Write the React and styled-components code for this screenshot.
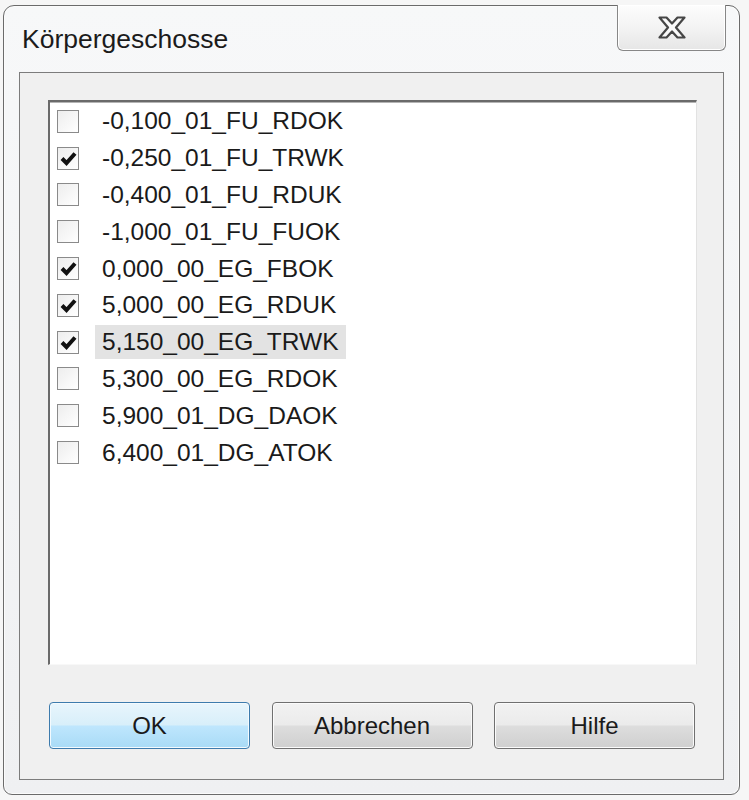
import React, { useState } from 'react';
import styled, { createGlobalStyle } from 'styled-components';

const GlobalStyle = createGlobalStyle`
  html, body {
    margin: 0;
    padding: 0;
    background: #f6f6f6;
    font-family: "Liberation Sans", Arial, sans-serif;
  }
`;

const Window = styled.div`
  box-sizing: border-box;
  margin: 5px 0 0 3px;
  width: 737px;
  height: 790px;
  border: 1px solid #6b6b6b;
  border-radius: 11px 11px 9px 9px;
  background: linear-gradient(180deg, #f7f8f9 0%, #eff0f2 100%);
  box-shadow: inset 0 0 0 1px #fbfbfb;
  display: flex;
  flex-direction: column;
`;

const TitleBar = styled.div`
  height: 66px;
  display: flex;
  justify-content: space-between;
  padding-left: 18px;
`;

const Title = styled.div`
  align-self: center;
  margin-top: 1px;
  font-size: 26.5px;
  color: #1b1b1b;
`;

const CloseButton = styled.button`
  box-sizing: border-box;
  margin: -1px 13px 0 0;
  width: 109px;
  height: 46px;
  border: 1px solid #878787;
  border-top: none;
  border-radius: 0 0 6px 6px;
  background: linear-gradient(180deg, #fdfdfd 0%, #f3f3f3 50%, #e6e6e6 100%);
  box-shadow: inset 0 0 0 1px #ffffff;
  display: flex;
  align-items: center;
  justify-content: center;
  padding: 0;
  cursor: pointer;
`;

const Client = styled.div`
  box-sizing: border-box;
  margin: 0 15px 0 15px;
  height: 708px;
  border: 1px solid #7c7c7c;
  background: #f0f0f0;
  padding: 27px 26px 0 28px;
  display: flex;
  flex-direction: column;
`;

const ListBox = styled.div`
  box-sizing: border-box;
  height: 565px;
  background: #ffffff;
  border-style: solid;
  border-width: 2px 1px 1px 2px;
  border-color: #6a6a6a #e2e2e2 #f8f8f8 #6a6a6a;
  box-shadow: inset 0 1px 0 #b4b4b4;
  padding: 1px 0 0 7px;
`;

const Row = styled.div`
  height: 36.8px;
  display: flex;
  align-items: center;
`;

const CheckBox = styled.div`
  box-sizing: border-box;
  width: 22px;
  height: 23px;
  border: 1px solid #8a8a8a;
  background: linear-gradient(135deg, #ededed 0%, #ffffff 100%);
  display: flex;
  align-items: center;
  justify-content: center;
  flex-shrink: 0;
`;

const Label = styled.span`
  margin-left: 16px;
  height: 34px;
  padding: 0 7px;
  display: flex;
  align-items: center;
  font-size: 24.5px;
  color: #1a1a1a;
  background: ${props => (props.$selected ? '#e3e3e3' : 'transparent')};
`;

const ButtonRow = styled.div`
  margin: 37px 0 0 1px;
  width: 646px;
  display: flex;
  justify-content: space-between;
`;

const Button = styled.button`
  box-sizing: border-box;
  width: 201px;
  height: 47px;
  border-radius: 4px;
  border: 1px solid ${props => (props.$primary ? '#3d7bad' : '#707070')};
  background: ${props =>
    props.$primary
      ? 'linear-gradient(180deg, #e8f5fc 0%, #d8effa 48%, #bee6fd 52%, #a8dbf6 100%)'
      : 'linear-gradient(180deg, #f2f2f2 0%, #ebebeb 48%, #dddddd 52%, #cfcfcf 100%)'};
  box-shadow: inset 0 0 0 1px ${props => (props.$primary ? '#f3fafe' : '#fbfbfb')};
  font-family: "Liberation Sans", Arial, sans-serif;
  font-size: 24px;
  color: #1a1a1a;
  padding: 0;
  cursor: pointer;
`;

const Check = () => (
  <svg width="17" height="15" viewBox="0 0 17 15">
    <path d="M2 7.5 L6.5 12 L15 2.5" fill="none" stroke="#111" strokeWidth="4" strokeLinejoin="miter" />
  </svg>
);

const CloseGlyph = () => (
  <svg width="28" height="23" viewBox="0 0 28 23">
    <path
      d="M1.5 1.5 H8.5 L14 7.5 L19.5 1.5 H26.5 L18 11.5 L26.5 21.5 H19.5 L14 15.5 L8.5 21.5 H1.5 L10 11.5 Z"
      fill="#fafafa"
      stroke="#464646"
      strokeWidth="2.2"
      strokeLinejoin="round"
    />
  </svg>
);

const initialItems = [
  { name: '-0,100_01_FU_RDOK', checked: false },
  { name: '-0,250_01_FU_TRWK', checked: true },
  { name: '-0,400_01_FU_RDUK', checked: false },
  { name: '-1,000_01_FU_FUOK', checked: false },
  { name: '0,000_00_EG_FBOK', checked: true },
  { name: '5,000_00_EG_RDUK', checked: true },
  { name: '5,150_00_EG_TRWK', checked: true },
  { name: '5,300_00_EG_RDOK', checked: false },
  { name: '5,900_01_DG_DAOK', checked: false },
  { name: '6,400_01_DG_ATOK', checked: false }
];

const App = () => {
  const [items, setItems] = useState(initialItems);
  const [selected, setSelected] = useState(6);

  const toggle = (index) => {
    setItems(items.map((item, i) => (i === index ? { ...item, checked: !item.checked } : item)));
  };

  return (
    <>
      <GlobalStyle />
      <Window>
        <TitleBar>
          <Title>Körpergeschosse</Title>
          <CloseButton aria-label="Schließen">
            <CloseGlyph />
          </CloseButton>
        </TitleBar>
        <Client>
          <ListBox>
            {items.map((item, index) => (
              <Row key={item.name} onClick={() => setSelected(index)}>
                <CheckBox onClick={() => toggle(index)}>{item.checked && <Check />}</CheckBox>
                <Label $selected={selected === index}>{item.name}</Label>
              </Row>
            ))}
          </ListBox>
          <ButtonRow>
            <Button $primary>OK</Button>
            <Button>Abbrechen</Button>
            <Button>Hilfe</Button>
          </ButtonRow>
        </Client>
      </Window>
    </>
  );
};

export default App;
